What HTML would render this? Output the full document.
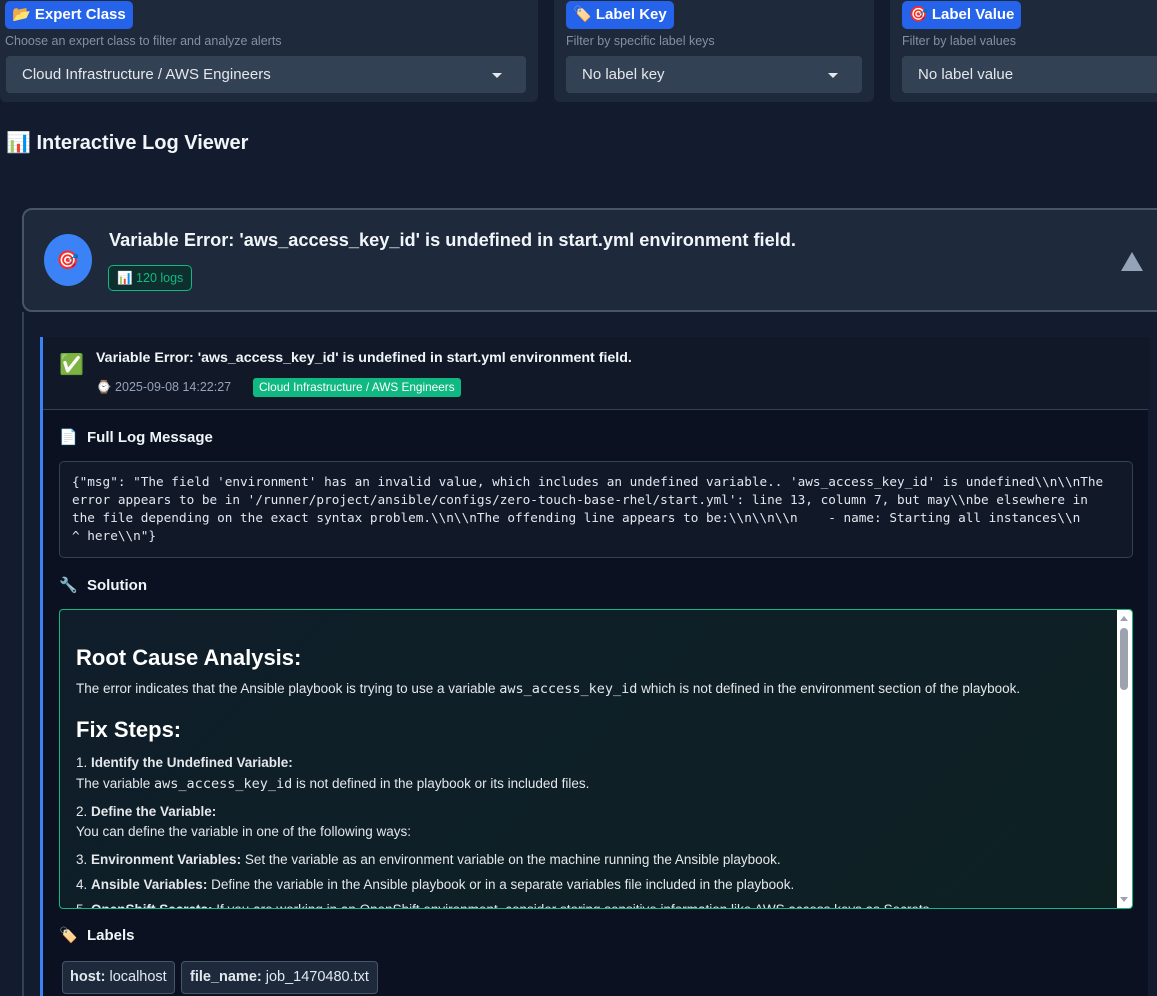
<!DOCTYPE html>
<html><head><meta charset="utf-8"><style>
*{box-sizing:border-box;margin:0;padding:0}
body{width:1157px;height:996px;overflow:hidden;background:#131c2e;font-family:"Liberation Sans","Noto Sans CJK SC",sans-serif;color:#e2e8f0;position:relative}
.panel{position:absolute;top:-6px;height:108px;background:#1e293b;border-radius:6px}
.badge{position:absolute;top:1px;height:28px;background:#2563eb;color:#fff;font-weight:bold;font-size:15px;line-height:28px;padding:0 7px;border-radius:5px}
.desc{position:absolute;top:34px;font-size:12.5px;color:#8291a6}
.sel{position:absolute;top:56px;height:37px;background:#334155;border-radius:4px;font-size:15px;line-height:38px;padding-left:16px;color:#e5e7eb}
.caret{position:absolute;right:24px;top:17px;border:5px solid transparent;border-top:5px solid #e5e7eb}
.abs{position:absolute}
.mono{font-family:"DejaVu Sans Mono","Liberation Mono",monospace}
.h{font-size:15px;font-weight:bold;color:#f1f5f9}
.h i{font-style:normal;display:inline-block;width:28px}
</style></head><body>
<div class="panel" style="left:0;width:538px"></div>
<div class="badge" style="left:5px">📂 Expert Class</div>
<div class="desc" style="left:5px">Choose an expert class to filter and analyze alerts</div>
<div class="sel" style="left:6px;width:520px">Cloud Infrastructure / AWS Engineers<div class="caret"></div></div>

<div class="panel" style="left:554px;width:320px"></div>
<div class="badge" style="left:566px">🏷️ Label Key</div>
<div class="desc" style="left:566px">Filter by specific label keys</div>
<div class="sel" style="left:566px;width:296px">No label key<div class="caret"></div></div>

<div class="panel" style="left:890px;width:280px"></div>
<div class="badge" style="left:902px">🎯 Label Value</div>
<div class="desc" style="left:902px">Filter by label values</div>
<div class="sel" style="left:902px;width:270px">No label value</div>

<div class="abs" style="left:6px;top:130px;font-size:20px;font-weight:bold;color:#f1f5f9">📊 Interactive Log Viewer</div>

<div class="abs" style="left:22px;top:208px;width:1150px;height:104px;background:#1e293b;border:2px solid #475569;border-radius:10px"></div>
<div class="abs" style="left:44px;top:234px;width:48px;height:52px;border-radius:50%;background:#3b82f6;text-align:center;line-height:52px;font-size:18px">🎯</div>
<div class="abs" style="left:109px;top:230px;font-size:18.2px;font-weight:bold;color:#f1f5f9">Variable Error: 'aws_access_key_id' is undefined in start.yml environment field.</div>
<div class="abs" style="left:108px;top:265px;height:26px;padding:0 8px;border:1px solid #10b981;background:#0f2e2e;border-radius:5px;color:#10b981;font-size:12.5px;line-height:24px">📊 120 logs</div>
<div class="abs" style="left:1121px;top:252px;border:11px solid transparent;border-bottom:19px solid #94a3b8;border-top:0"></div>

<div class="abs" style="left:22px;top:312px;width:2px;height:684px;background:#334155"></div>
<div class="abs" style="left:40px;top:337px;width:1110px;height:72px;background:#111827"></div>
<div class="abs" style="left:40px;top:409px;width:1108px;height:1px;background:#334155"></div>
<div class="abs" style="left:41px;top:410px;width:1107px;height:586px;background:#0b1120"></div>
<div class="abs" style="left:40px;top:337px;width:3px;height:659px;background:#3b82f6"></div>
<div class="abs" style="left:59px;top:352px;font-size:20px">✅</div>
<div class="abs" style="left:96px;top:350px;font-size:14.2px;font-weight:bold;color:#f1f5f9">Variable Error: 'aws_access_key_id' is undefined in start.yml environment field.</div>
<div class="abs" style="left:96px;top:380px;font-size:12.5px;color:#94a3b8">⌚ 2025-09-08 14:22:27</div>
<div class="abs" style="left:253px;top:378px;height:19px;padding:0 6px;background:#10b981;border-radius:3px;color:#fff;font-size:11.8px;line-height:19px">Cloud Infrastructure / AWS Engineers</div>

<div class="abs h" style="left:59px;top:428px"><i>📄</i>Full Log Message</div>
<div class="abs mono" style="left:59px;top:461px;width:1074px;height:97px;background:#111827;border:1px solid #334155;border-radius:5px;padding:11px 12px;font-size:12.7px;line-height:18px;color:#e2e8f0;white-space:pre;overflow:hidden">{"msg": "The field 'environment' has an invalid value, which includes an undefined variable.. 'aws_access_key_id' is undefined\\n\\nThe
error appears to be in '/runner/project/ansible/configs/zero-touch-base-rhel/start.yml': line 13, column 7, but may\\nbe elsewhere in
the file depending on the exact syntax problem.\\n\\nThe offending line appears to be:\\n\\n\\n    - name: Starting all instances\\n
^ here\\n"}</div>

<div class="abs h" style="left:59px;top:576px"><i>🔧</i>Solution</div>
<div class="abs" style="left:59px;top:609px;width:1074px;height:300px;background:linear-gradient(135deg,#0f1e2a,#0d2123);border:1px solid #10b981;border-radius:4px;overflow:hidden;font-size:13.5px;color:#e5e7eb">
 <div style="position:absolute;left:16px;top:35px;font-size:22px;font-weight:bold;color:#fff">Root Cause Analysis:</div>
 <div style="position:absolute;left:16px;top:71px">The error indicates that the Ansible playbook is trying to use a variable <span class="mono" style="font-size:13.5px">aws_access_key_id</span> which is not defined in the environment section of the playbook.</div>
 <div style="position:absolute;left:16px;top:107px;font-size:22px;font-weight:bold;color:#fff">Fix Steps:</div>
 <div style="position:absolute;left:16px;top:145px">1. <b>Identify the Undefined Variable:</b></div>
 <div style="position:absolute;left:16px;top:166px">The variable <span class="mono" style="font-size:13.5px">aws_access_key_id</span> is not defined in the playbook or its included files.</div>
 <div style="position:absolute;left:16px;top:194px">2. <b>Define the Variable:</b></div>
 <div style="position:absolute;left:16px;top:214px">You can define the variable in one of the following ways:</div>
 <div style="position:absolute;left:16px;top:242px">3. <b>Environment Variables:</b> Set the variable as an environment variable on the machine running the Ansible playbook.</div>
 <div style="position:absolute;left:16px;top:267px">4. <b>Ansible Variables:</b> Define the variable in the Ansible playbook or in a separate variables file included in the playbook.</div>
 <div style="position:absolute;left:16px;top:292px">5. <b>OpenShift Secrets:</b> If you are working in an OpenShift environment, consider storing sensitive information like AWS access keys as Secrets.</div>
 <div style="position:absolute;right:0;top:0;width:15px;height:300px;background:#fff"></div>
 <div style="position:absolute;right:4px;top:18px;width:8px;height:62px;background:#9ca3af;border-radius:4px"></div>
 <div style="position:absolute;right:4px;top:6px;border:4px solid transparent;border-bottom:5px solid #9ca3af;border-top:0"></div>
 <div style="position:absolute;right:4px;bottom:6px;border:4px solid transparent;border-top:5px solid #9ca3af;border-bottom:0"></div>
</div>

<div class="abs h" style="left:59px;top:926px"><i>🏷️</i>Labels</div>
<div class="abs" style="left:62px;top:961px;height:33px;padding:0 7px;background:#1e293b;border:1px solid #475569;border-radius:4px;font-size:14.5px;line-height:31px"><b>host:</b> localhost</div>
<div class="abs" style="left:181px;top:961px;height:33px;padding:0 8px;background:#1e293b;border:1px solid #475569;border-radius:4px;font-size:14.5px;line-height:31px"><b>file_name:</b> job_1470480.txt</div>
</body></html>
